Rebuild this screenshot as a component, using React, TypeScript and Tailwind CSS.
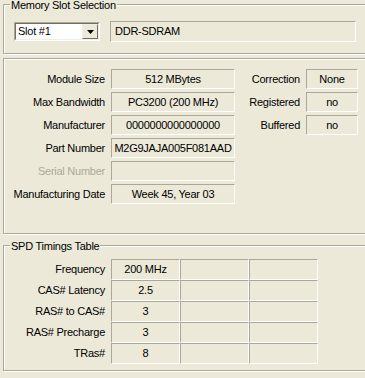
import React from "react";

const font = { fontFamily: '"Liberation Sans", Arial, sans-serif' };

interface GroupProps {
  title?: string;
  className?: string;
  children?: React.ReactNode;
}

// etched XP-style group box
const Group: React.FC<GroupProps> = ({ title, className = "", children }) => (
  <div
    className={`relative w-[372px] border border-[#aca899] shadow-[inset_1px_1px_0_#fff,1px_1px_0_#fff] ${className}`}
  >
    {title && (
      <span className="absolute -top-[5px] left-[6px] px-[1px] bg-[#ece9d8] leading-[11px] whitespace-nowrap">
        {title}
      </span>
    )}
    {children}
  </div>
);

const Field: React.FC<{ w: string; children?: React.ReactNode }> = ({ w, children }) => (
  <div
    className={`${w} h-[20px] flex items-center justify-center border-t border-l border-[#aca899] border-b border-r border-b-white border-r-white whitespace-nowrap`}
  >
    {children}
  </div>
);

const moduleRows = [
  { label: "Module Size", value: "512 MBytes", rLabel: "Correction", rValue: "None" },
  { label: "Max Bandwidth", value: "PC3200 (200 MHz)", rLabel: "Registered", rValue: "no" },
  { label: "Manufacturer", value: "0000000000000000", rLabel: "Buffered", rValue: "no" },
  { label: "Part Number", value: "M2G9JAJA005F081AAD" },
  { label: "Serial Number", value: "", disabled: true },
  { label: "Manufacturing Date", value: "Week 45, Year 03" },
];

const timings = [
  { label: "Frequency", value: "200 MHz" },
  { label: "CAS# Latency", value: "2.5" },
  { label: "RAS# to CAS#", value: "3" },
  { label: "RAS# Precharge", value: "3" },
  { label: "TRas#", value: "8" },
];

export default function App() {
  return (
    <div
      className="w-[365px] h-[378px] overflow-hidden bg-[#ece9d8] text-black text-[11px] tracking-[-0.25px] pl-[3px] pt-[4px] flex flex-col"
      style={font}
    >
      {/* Memory Slot Selection */}
      <Group title="Memory Slot Selection" className="h-[50px] shrink-0">
        <div className="flex items-start pt-[16px] pl-[10px] gap-[10px]">
          {/* combobox */}
          <div className="mt-[1px] w-[86px] h-[19px] border border-t-[#aca899] border-l-[#aca899] border-b-white border-r-white">
            <div className="h-full flex items-center bg-white border border-t-[#716f64] border-l-[#716f64] border-b-[#f1efe2] border-r-[#f1efe2]">
              <span className="flex-1 pl-[2px] leading-none">Slot #1</span>
              <div className="w-[16px] h-full bg-[#ece9d8] border border-t-[#f1efe2] border-l-[#f1efe2] border-b-[#716f64] border-r-[#716f64] flex items-center justify-center">
                <svg width="7" height="4" viewBox="0 0 7 4">
                  <path d="M0 0h7L3.5 4z" fill="#000" />
                </svg>
              </div>
            </div>
          </div>
          <div className="w-[246px] h-[21px] flex items-center pl-[4px] border-t border-l border-[#aca899] border-b border-r border-b-white border-r-white">
            DDR-SDRAM
          </div>
        </div>
      </Group>

      {/* Module info */}
      <Group className="mt-[4px] h-[176px] shrink-0">
        <div className="flex flex-col gap-[3px] pt-[10px]">
          {moduleRows.map((r) => (
            <div key={r.label} className="flex items-center h-[20px]">
              <div className={`w-[101px] text-right whitespace-nowrap ${r.disabled ? "text-[#aca899]" : ""}`}>
                {r.label}
              </div>
              <div className="ml-[6px]">
                <Field w="w-[124px]">{r.value}</Field>
              </div>
              {r.rLabel && (
                <>
                  <div className="w-[65px] text-right whitespace-nowrap">{r.rLabel}</div>
                  <div className="ml-[6px]">
                    <Field w="w-[52px]">{r.rValue}</Field>
                  </div>
                </>
              )}
            </div>
          ))}
        </div>
      </Group>

      {/* SPD Timings Table */}
      <Group title="SPD Timings Table" className="mt-[11px] h-[126px] shrink-0">
        <div className="flex flex-col pt-[13px]">
          {timings.map((t) => (
            <div key={t.label} className="flex items-center h-[21px]">
              <div className="w-[101px] text-right whitespace-nowrap">{t.label}</div>
              <div className="ml-[6px] flex">
                {[t.value, "", ""].map((v, i) => (
                  <div
                    key={i}
                    className="w-[69px] h-[21px] flex items-center justify-center border-t border-l border-[#aca899] border-b border-r border-b-white border-r-white"
                  >
                    {v}
                  </div>
                ))}
              </div>
            </div>
          ))}
        </div>
      </Group>
    </div>
  );
}
